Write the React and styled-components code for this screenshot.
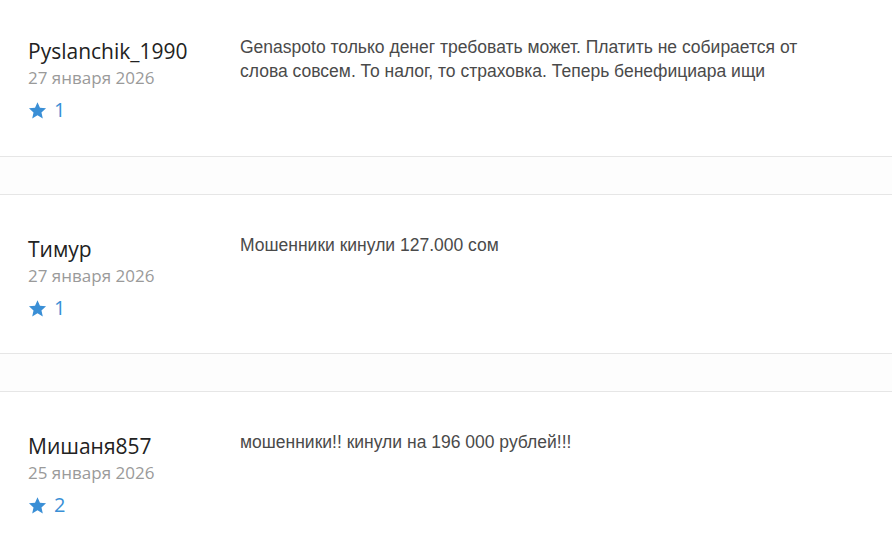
import React from "react";
import styled, { createGlobalStyle } from "styled-components";

const GlobalStyle = createGlobalStyle`
	body {
		margin: 0;
		background: #fff;
		font-family: "Open Sans", "Liberation Sans", sans-serif;
	}
`;

const reviews = [
	{
		id: 1,
		name: "Pyslanchik_1990",
		date: "27 января 2026",
		rating: 1,
		text: "Genaspoto только денег требовать может. Платить не собирается от слова совсем. То налог, то страховка. Теперь бенефициара ищи",
	},
	{ id: 2, name: "Тимур", date: "27 января 2026", rating: 1, text: "Мошенники кинули 127.000 сом" },
	{ id: 3, name: "Мишаня857", date: "25 января 2026", rating: 2, text: "мошенники!! кинули на 196 000 рублей!!!" },
];

const List = styled.div`
	margin-top: -3px;
	display: flex;
	flex-flow: column nowrap;
	gap: 37px;
	background: #fdfdfd;
`;

const Card = styled.div`
	display: flex;
	flex-flow: row nowrap;
	height: 160px;
	box-sizing: border-box;
	padding: 38px 0 0 28px;
	background: #fff;
	border-top: 1px solid #e6e6e6;
	border-bottom: 1px solid #e6e6e6;
	&:first-child {
		border-top: none;
	}
`;

const Author = styled.div`
	width: 212px;
	flex: none;
	display: flex;
	flex-flow: column nowrap;
`;

const Name = styled.div`
	margin-top: 1px;
	font-size: 21px;
	line-height: 30px;
	color: #222;
`;

const Date = styled.div`
	font-size: 17px;
	line-height: 24px;
	color: #9a9a9a;
`;

const Rating = styled.div`
	display: flex;
	align-items: center;
	gap: 7px;
	margin-top: 6px;
	font-size: 20px;
	line-height: 28px;
	color: #3a8fd6;
`;

const Text = styled.p`
	margin: 0;
	width: 580px;
	font-family: "Liberation Sans", Arial, sans-serif;
	font-size: 17.5px;
	line-height: 24px;
	color: #4a4a4a;
`;

const Star = () => (
	<svg width="19" height="19" viewBox="0 0 24 24">
		<path
			fill="#3a8fd6"
			d="M12 1.5l3.1 7.1 7.7.7-5.8 5.1 1.7 7.6L12 18.1 5.3 22l1.7-7.6L1.2 9.3l7.7-.7z"
		/>
	</svg>
);

const App = () => (
	<>
		<GlobalStyle />
		<List>
			{reviews.map(r => (
				<Card key={r.id}>
					<Author>
						<Name>{r.name}</Name>
						<Date>{r.date}</Date>
						<Rating>
							<Star />
							{r.rating}
						</Rating>
					</Author>
					<Text>{r.text}</Text>
				</Card>
			))}
		</List>
	</>
);

export default App;
